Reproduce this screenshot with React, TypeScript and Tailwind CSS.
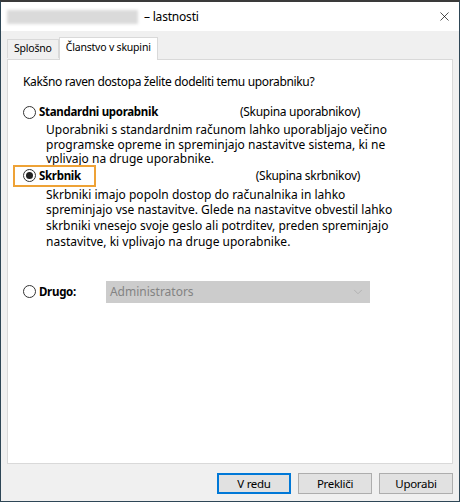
import { X, ChevronDown } from "lucide-react";

const font = "font-['Segoe_UI','Noto_Sans',sans-serif]";

function Radio({ checked }: { checked?: boolean }) {
  return (
    <span className="flex h-[13px] w-[13px] shrink-0 items-center justify-center rounded-full border border-[#333] bg-white">
      {checked ? <span className="h-[7px] w-[7px] rounded-full bg-[#222]" /> : null}
    </span>
  );
}

function Button({ label, primary }: { label: string; primary?: boolean }) {
  return (
    <button
      className={
        "flex h-[21px] w-[74px] items-center justify-center bg-[#e1e1e1] text-[11.5px] tracking-[-0.3px] text-black " +
        (primary ? "border-2 border-[#0078d7]" : "border border-[#adadad]")
      }
    >
      {label}
    </button>
  );
}

export default function App() {
  return (
    <div className={`flex h-[502px] w-[460px] flex-col border border-t-2 border-[#2e4656] border-t-[#3a3a3a] bg-[#f0f0f0] text-[12px] text-black ${font}`}>
      {/* title bar */}
      <div className="flex h-[29px] shrink-0 items-center bg-white pl-[6px] pr-[7px]">
        <div className="h-[14px] w-[131px] bg-[#dadada] blur-[1.5px]" />
        <span className="ml-[6px] text-[12px] tracking-[-0.2px]">– lastnosti</span>
        <X className="ml-auto h-[15px] w-[15px] text-black" strokeWidth={1.1} />
      </div>

      {/* tabs */}
      <div className="flex h-[28px] items-end pl-[6px] text-[10.5px] tracking-[-0.2px]">
        <div className="mb-[1px] flex h-[19px] items-center border border-b-0 border-[#d9d9d9] px-[6px]">Splošno</div>
        <div className="relative -mb-px flex h-[23px] items-center border border-b-0 border-[#d9d9d9] bg-white px-[6px] pb-[2px]">
          Članstvo v skupini
        </div>
      </div>

      {/* panel */}
      <div className="mx-[6px] h-[405px] border border-[#d9d9d9] bg-white pl-[15px] pt-[14px]">
        <p className="leading-[16px] tracking-[-0.35px]">Kakšno raven dostopa želite dodeliti temu uporabniku?</p>

        <div className="mt-[13px] flex w-[338px] items-center justify-between pr-[1px]">
          <div className="flex items-center gap-[3px]">
            <Radio />
            <span className="text-[11.5px] font-bold tracking-[-0.3px]">Standardni uporabnik</span>
          </div>
          <span className="tracking-[-0.3px]">(Skupina uporabnikov)</span>
        </div>
        <p className="mt-[2px] whitespace-nowrap pl-[23px] leading-[14.6px]">
          Uporabniki s standardnim računom lahko uporabljajo večino
          <br />
          programske opreme in spreminjajo nastavitve sistema, ki ne
          <br />
          vplivajo na druge uporabnike.
        </p>

        <div className="-mt-[2px] flex w-[338px] items-center justify-between pr-[1px]">
          <div className="-ml-[10px] flex h-[22px] w-[83px] items-center gap-[3px] border-2 border-[#eea236] pl-[8px]">
            <Radio checked />
            <span className="text-[11.5px] font-bold tracking-[-0.3px]">Skrbnik</span>
          </div>
          <span className="tracking-[-0.3px]">(Skupina skrbnikov)</span>
        </div>
        <p className="mt-[0px] whitespace-nowrap pl-[23px] leading-[15.7px]">
          Skrbniki imajo popoln dostop do računalnika in lahko
          <br />
          spreminjajo vse nastavitve. Glede na nastavitve obvestil lahko
          <br />
          skrbniki vnesejo svoje geslo ali potrditev, preden spreminjajo
          <br />
          nastavitve, ki vplivajo na druge uporabnike.
        </p>

        <div className="mt-[31px] flex items-center">
          <Radio />
          <span className="ml-[3px] text-[11.5px] font-bold tracking-[-0.3px]">Drugo:</span>
          <div className="ml-[30px] flex h-[22px] w-[264px] items-center justify-between bg-[#cccccc] pl-[4px] pr-[5px] text-[#838383]">
            <span>Administrators</span>
            <ChevronDown className="h-[14px] w-[14px] text-[#a8a8a8]" strokeWidth={1.2} />
          </div>
        </div>
      </div>

      {/* buttons */}
      <div className="flex justify-end gap-[7px] pr-[6px] pt-[9px]">
        <Button label="V redu" primary />
        <Button label="Prekliči" />
        <Button label="Uporabi" />
      </div>
    </div>
  );
}
